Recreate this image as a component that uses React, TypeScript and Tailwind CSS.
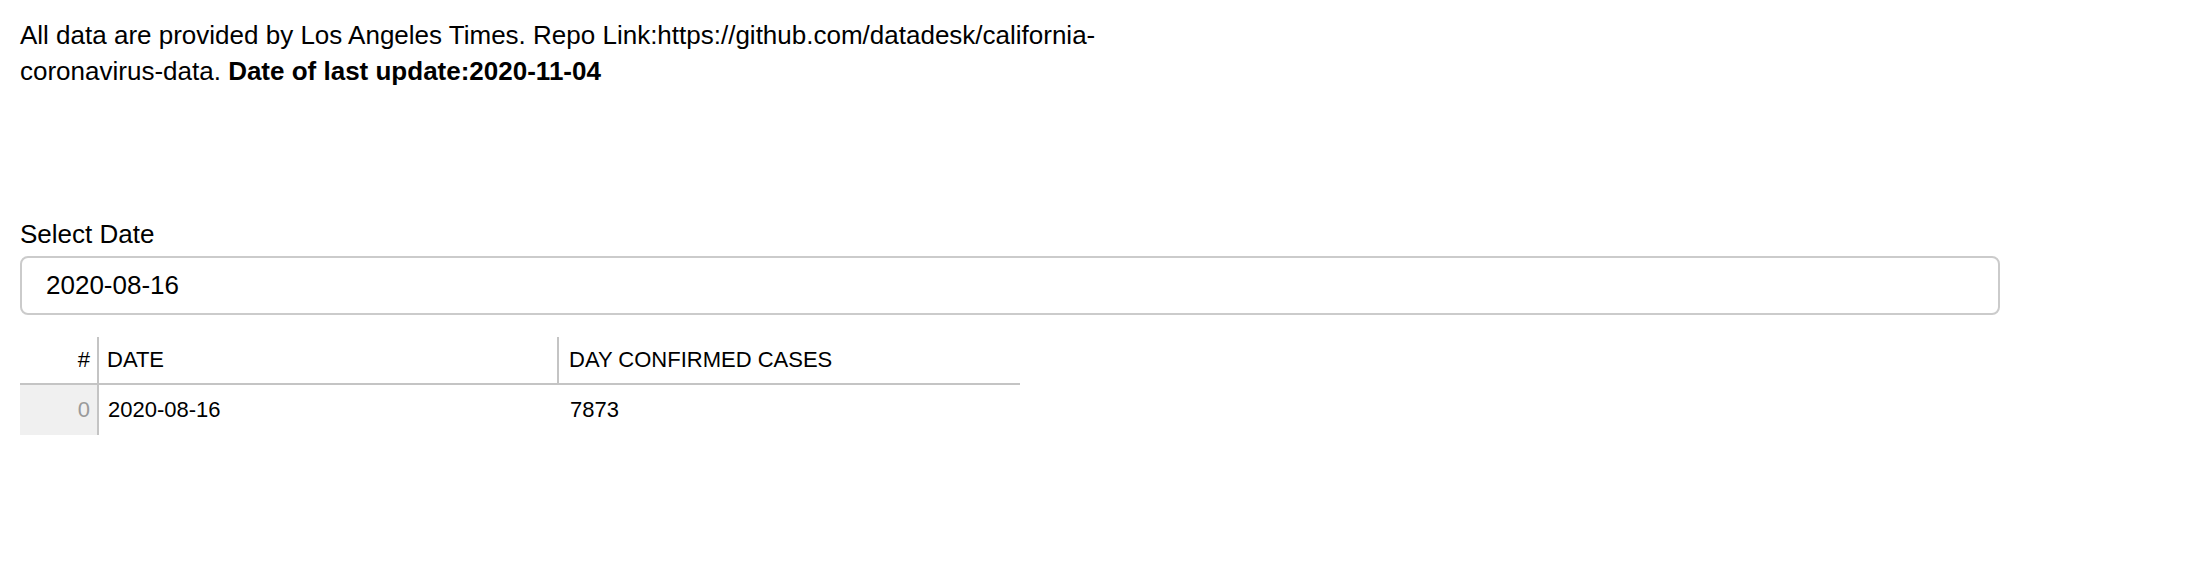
const rows = [{ idx: 0, date: '2020-08-16', cases: 7873 }];

const App = () => {
  return (
    <div className="w-[2198px] h-[572px] bg-white text-black font-['Liberation_Sans',Arial,sans-serif] pl-5 pt-[17px]">
      <p className="w-[1130px] text-[26px] leading-[36px]">
        All data are provided by Los Angeles Times. Repo Link:https://github.com/datadesk/california-coronavirus-data.{' '}
        <b className="font-bold">Date of last update:2020-11-04</b>
      </p>

      <div className="mt-[128px] w-[1980px]">
        <label className="block text-[26px] leading-[34px]">Select Date</label>
        <div className="mt-[5px] h-[59px] border-2 border-[#cbcbcb] rounded-[8px] flex items-center pl-[24px] text-[26px]">
          2020-08-16
        </div>
      </div>

      <div className="mt-[22px] w-[1000px] text-[22px] leading-[24px]">
        <div className="flex h-[48px] border-b-2 border-[#c4c4c4]">
          <div className="w-[79px] flex items-center justify-end pr-[7px] border-r-2 border-[#c4c4c4]">#</div>
          <div className="w-[460px] flex items-center pl-[8px] border-r-2 border-[#c4c4c4]">DATE</div>
          <div className="flex-1 flex items-center pl-[10px]">DAY CONFIRMED CASES</div>
        </div>
        {rows.map((r) => (
          <div key={r.idx} className="flex h-[50px]">
            <div className="w-[79px] flex items-center justify-end pr-[7px] bg-[#f0f0f0] text-[#9a9a9a] border-r-2 border-[#c4c4c4]">
              {r.idx}
            </div>
            <div className="w-[460px] flex items-center pl-[9px]">{r.date}</div>
            <div className="flex-1 flex items-center pl-[11px]">{r.cases}</div>
          </div>
        ))}
      </div>
    </div>
  );
};

export default App;
